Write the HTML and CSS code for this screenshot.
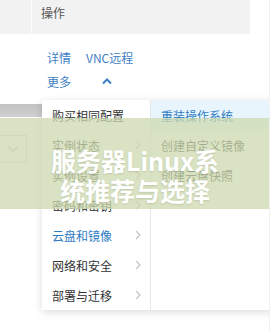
FILE: index.html
```html
<!DOCTYPE html>
<html lang="zh-CN">
<head>
  <meta charset="UTF-8">
  <meta name="viewport" content="width=device-width, initial-scale=1.0">
  <title>服务器Linux系统推荐与选择</title>
  <link rel="stylesheet" href="styles.css">
</head>
<body>
  <div id="page">
    <div class="table-head">
      <div class="cell-first"></div>
      <div class="cell-op">操作</div>
    </div>
    <div class="actions">
      <div class="action-row">
        <a class="link">详情</a>
        <a class="link">VNC远程</a>
      </div>
      <div class="action-row">
        <a class="link">更多</a>
        <svg class="chevron-up" width="12" height="8" viewBox="0 0 12 8">
          <polyline points="2,6.5 6,2.5 10,6.5" fill="none" stroke="#3f7fc4" stroke-width="2"/>
        </svg>
      </div>
    </div>
    <div class="scroll-band"></div>
    <div class="select-box">
      <svg width="12" height="8" viewBox="0 0 12 8">
        <polyline points="1.5,1.5 6,6 10.5,1.5" fill="none" stroke="#c4c4c4" stroke-width="1.3"/>
      </svg>
    </div>

    <!-- dropdown of "更多" -->
    <div id="dropdown">
      <ul class="menu-main">
        <li class="item">购买相同配置</li>
        <li class="item">实例状态<svg class="arrow" width="6" height="10" viewBox="0 0 6 10"><polyline points="1,1 5,5 1,9"/></svg></li>
        <li class="item">实例设置<svg class="arrow" width="6" height="10" viewBox="0 0 6 10"><polyline points="1,1 5,5 1,9"/></svg></li>
        <li class="item">密码和密钥<svg class="arrow" width="6" height="10" viewBox="0 0 6 10"><polyline points="1,1 5,5 1,9"/></svg></li>
        <li class="item active">云盘和镜像<svg class="arrow" width="6" height="10" viewBox="0 0 6 10"><polyline points="1,1 5,5 1,9"/></svg></li>
        <li class="item">网络和安全<svg class="arrow" width="6" height="10" viewBox="0 0 6 10"><polyline points="1,1 5,5 1,9"/></svg></li>
        <li class="item">部署与迁移<svg class="arrow" width="6" height="10" viewBox="0 0 6 10"><polyline points="1,1 5,5 1,9"/></svg></li>
      </ul>
      <ul class="menu-sub">
        <li class="item hover">重装操作系统</li>
        <li class="item">创建自定义镜像</li>
        <li class="item">创建云盘快照</li>
      </ul>
    </div>

    <div id="banner">服务器Linux系<br>统推荐与选择</div>
  </div>
</body>
</html>
```

FILE: styles.css
```css
body {
  margin: 0;
  background-color: #fff;
  font-family: "Noto Sans CJK SC", "Liberation Sans", sans-serif;
  font-size: 12px;
  color: #333;
}

#page {
  position: relative;
  width: 270px;
  height: 331px;
  overflow: hidden;
  border-right: 1px solid #f0f0f0;
  box-sizing: border-box;
}

.table-head {
  display: flex;
  width: 250px;
  height: 34px;
  background-color: #f2f2f2;
}

.cell-first {
  width: 31px;
  border-right: 1px solid #fbfbfb;
}

.cell-op {
  padding: 5px 0 0 9px;
  line-height: 16px;
  color: #555;
}

.actions {
  padding: 11px 0 0 47px;
}

.action-row {
  display: flex;
  align-items: center;
  height: 24px;
  gap: 15px;
}

.link {
  color: #3f7fc4;
  cursor: pointer;
}

.chevron-up {
  margin-left: 15px;
}

.scroll-band {
  margin-top: 11px;
  width: 50px;
  height: 13px;
  background: linear-gradient(#c2c2c2, #d0d0d0);
}

.select-box {
  display: flex;
  align-items: center;
  justify-content: center;
  margin: 18px 0 0 -1px;
  width: 28px;
  height: 28px;
  border: 1px solid #dcdcdc;
  box-sizing: border-box;
}

#dropdown {
  position: absolute;
  left: 42px;
  top: 100px;
  width: 240px;
  height: 210px;
  display: flex;
  background-color: #fff;
  box-shadow: 0 2px 8px rgba(0, 0, 0, 0.14);
}

#dropdown ul {
  list-style: none;
  margin: 0;
  padding: 0;
}

.menu-main {
  width: 108px;
}

.menu-sub {
  flex: 1;
  border-left: 1px solid #e6e6e6;
}

.item {
  display: flex;
  align-items: center;
  justify-content: space-between;
  height: 30px;
  padding: 0 9px 0 10px;
  color: #333;
  white-space: nowrap;
}

.item.active {
  color: #2e7cc4;
}

.item.hover {
  background-color: #e9f5fd;
  color: #2e7cc4;
}

.arrow polyline {
  fill: none;
  stroke: #c6c6c6;
  stroke-width: 1.3;
}

#banner {
  position: absolute;
  left: 0;
  top: 118px;
  width: 270px;
  height: 91px;
  padding-top: 27px;
  box-sizing: border-box;
  background-color: rgba(204, 218, 175, 0.75);
  color: #fff;
  font-size: 25px;
  font-weight: bold;
  line-height: 30px;
  text-align: center;
  text-shadow: 0 1px 2px rgba(0, 0, 0, 0.12);
}
```
